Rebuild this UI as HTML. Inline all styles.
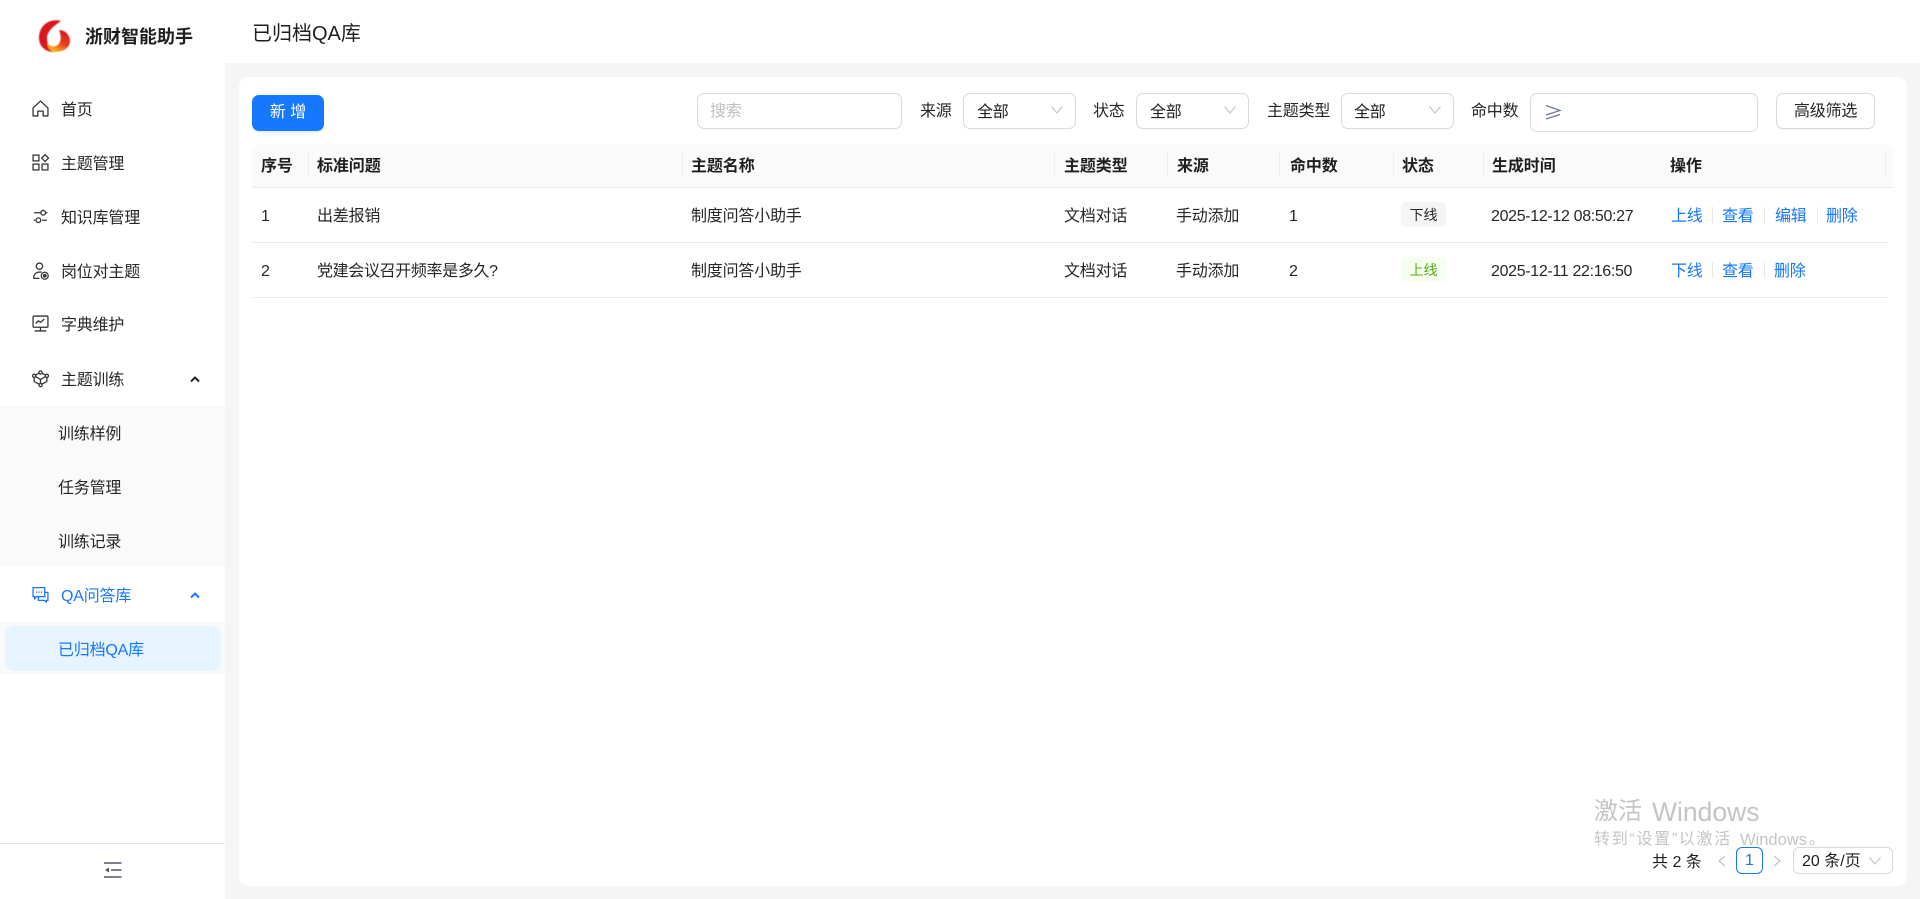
<!DOCTYPE html>
<html lang="zh-CN"><head><meta charset="utf-8"><title>已归档QA库</title>
<style>
*{box-sizing:border-box;margin:0;padding:0}
html,body{width:1920px;height:899px;overflow:hidden;background:#f5f5f5}
body{position:relative;font-family:"Liberation Sans","Noto Sans CJK SC",sans-serif;font-size:16px;color:#262626}
.a{position:absolute}
.t{position:absolute;white-space:nowrap;height:24px;line-height:24px;letter-spacing:-.2px}
.tm{letter-spacing:-.33px}
.b{font-weight:700;color:#1f1f1f;letter-spacing:-.1px}
.box{position:absolute;background:#fff;border:1.5px solid #d9d9d9;border-radius:7px}
.dv{position:absolute;width:1px;height:26px;top:152px;background:#efefef}
.ln{position:absolute;left:252px;width:1637px;height:1px;background:#ececec}
.ad{position:absolute;width:1px;height:16px;background:#e8e8e8}
.l{color:#1677ff}
svg{position:absolute;overflow:visible}
.ic{fill:none;stroke:#333;stroke-width:1.2}
.wm{position:absolute;white-space:nowrap;color:#c4c4c4;z-index:5}
</style></head><body>

<!-- sidebar -->
<div class="a" style="left:0;top:0;width:225px;height:899px;background:#fff"></div>
<div class="a" style="left:0;top:0;width:1920px;height:63px;background:#fff"></div>
<div class="a" style="left:0;top:405px;width:225px;height:162px;background:#fafafa"></div>
<div class="a" style="left:0;top:621px;width:225px;height:54px;background:#fafafa"></div>
<div class="a" style="left:5px;top:626px;width:216px;height:45px;background:#e6f4ff;border-radius:9px"></div>
<div class="a" style="left:0;top:843px;width:225px;height:1px;background:#e5e5e5"></div>

<!-- logo -->
<svg style="left:36px;top:18px" width="36" height="36" viewBox="0 0 36 36">
<defs><linearGradient id="g" x1="0.8" y1="0" x2="0.3" y2="1"><stop offset="0" stop-color="#d9121f"/><stop offset=".55" stop-color="#e8401a"/><stop offset="1" stop-color="#f9c21c"/></linearGradient><filter id="f"><feGaussianBlur stdDeviation=".45"/></filter></defs>
<g filter="url(#f)">
<path d="M25 3C14 0 3 7 3 20C3 28 9 34 18 34C14 31 11 26 11 20C11 14 16 9 25 3Z" fill="#d9121f"/>
<path d="M23 12C30 12 34 18 34 23C34 30 27 34 18 34C14 33 11 29 11 25C13 28 17 29 20 28C25 26 26 19 23 12Z" fill="url(#g)"/>
</g></svg>
<div class="t" style="left:85px;top:25px;font-size:18px;font-weight:700;color:#1f1f1f;letter-spacing:0">浙财智能助手</div>
<div class="t" style="left:252px;top:21px;font-size:20px;height:26px;line-height:26px;color:#1f1f1f;letter-spacing:0">已归档QA库</div>

<!-- icons -->
<svg class="ic" style="left:32px;top:100px" width="17" height="17" viewBox="0 0 16 16"><path d="M1 7.500L8 1L15 7.500V15H10.500V10.500H5.500V15H1Z" stroke-linejoin="round"/></svg>
<svg class="ic" style="left:32px;top:154px" width="17" height="17" viewBox="0 0 16 16"><rect x="1" y="1" width="5.500" height="5.500"/><rect x="1" y="9.500" width="5.500" height="5.500"/><rect x="9.500" y="9.500" width="5.500" height="5.500"/><path d="M12.300 .6L15.500 3.800L12.300 7L9.100 3.800Z"/></svg>
<svg class="ic" style="left:32px;top:208px" width="17" height="17" viewBox="0 0 16 16" stroke-width="1.5"><path d="M2 4.500H8M14 11.500H9.500M14.500 4.500H13M1.500 11.500H3"/><circle cx="10.500" cy="4.500" r="2.200"/><circle cx="6" cy="11.500" r="2.200"/></svg>
<svg class="ic" style="left:32px;top:262px" width="17" height="18" viewBox="0 0 16 17"><circle cx="7" cy="4" r="3"/><path d="M1.500 15.500C1.500 11.500 4 9.500 7.500 9.500H9M1.500 15.500H7"/><circle cx="12" cy="13" r="3.300"/><circle cx="12" cy="13" r="1.200" fill="#333"/></svg>
<svg class="ic" style="left:32px;top:315px" width="17" height="17" viewBox="0 0 16 16"><rect x="1" y="1" width="14" height="10.500" rx=".8"/><path d="M3.500 8L6 5.500L8 7L11.500 3.800M8 11.500V15M2.500 15H13.500"/></svg>
<svg class="ic" style="left:32px;top:370px" width="17" height="17" viewBox="0 0 16 16"><circle cx="8" cy="2.300" r="1.500"/><circle cx="2" cy="5.500" r="1.500"/><circle cx="14" cy="5.500" r="1.500"/><circle cx="8" cy="14.200" r="1.500"/><path d="M6.700 3L3.300 4.800M9.300 3L12.700 4.800M2 7V10.800L6.800 13.400M14 7V10.800L9.200 13.400M3.300 6.200L8 9L12.700 6.200M8 9V12.700"/></svg>
<svg style="left:189px;top:375px" width="12" height="8" viewBox="0 0 12 8"><path d="M2 6.500L6 2.500L10 6.500" fill="none" stroke="#222" stroke-width="2"/></svg>
<svg class="ic" style="left:32px;top:586px;stroke:#1677ff" width="17" height="17" viewBox="0 0 16 16"><path d="M1 1.500H12V10H4.500L2.500 12V10H1Z"/><path d="M12 6H15V13.500H13.500V15L11.500 13.500H6V10"/><path d="M4 5.800H5M6.200 5.800H7.200M8.400 5.800H9.400" stroke-width="1.400"/></svg>
<svg style="left:189px;top:591px" width="12" height="8" viewBox="0 0 12 8"><path d="M2 6.500L6 2.500L10 6.500" fill="none" stroke="#1677ff" stroke-width="2"/></svg>
<svg style="left:104px;top:861px" width="18" height="18" viewBox="0 0 18 18"><path d="M0 2H17.500M0 16H17.500M7 9H17.500" stroke="#4e5666" stroke-width="1.500" fill="none"/><path d="M1 9L5 6.500V11.500Z" fill="#4e5666"/></svg>

<!-- menu text -->
<div class="t" style="left:61px;top:99px">首页</div>
<div class="t" style="left:61px;top:153px">主题管理</div>
<div class="t" style="left:61px;top:207px">知识库管理</div>
<div class="t" style="left:61px;top:261px">岗位对主题</div>
<div class="t" style="left:61px;top:314px">字典维护</div>
<div class="t" style="left:61px;top:369px">主题训练</div>
<div class="t" style="left:58px;top:423px">训练样例</div>
<div class="t" style="left:58px;top:477px">任务管理</div>
<div class="t" style="left:58px;top:531px">训练记录</div>
<div class="t l" style="left:61px;top:585px">QA问答库</div>
<div class="t l" style="left:58px;top:639px">已归档QA库</div>

<!-- card -->
<div class="a" style="left:239px;top:77px;width:1668px;height:809px;background:#fff;border-radius:10px"></div>

<!-- toolbar -->
<div class="a" style="left:252px;top:95px;width:72px;height:36px;background:#1677ff;border-radius:7px;color:#fff;text-align:center;line-height:36px;box-shadow:0 2px 0 rgba(5,145,255,.1)">新 增</div>
<div class="box" style="left:697px;top:93px;width:205px;height:36px"></div>
<div class="t" style="left:710px;top:100px;color:#bfbfbf">搜索</div>
<div class="t" style="left:920px;top:100px">来源</div>
<div class="box" style="left:963px;top:93px;width:113px;height:36px"></div>
<div class="t" style="left:977px;top:101px;color:#1f1f1f">全部</div>
<div class="t" style="left:1093px;top:100px">状态</div>
<div class="box" style="left:1136px;top:93px;width:113px;height:36px"></div>
<div class="t" style="left:1150px;top:101px;color:#1f1f1f">全部</div>
<div class="t" style="left:1267px;top:100px">主题类型</div>
<div class="box" style="left:1341px;top:93px;width:113px;height:36px"></div>
<div class="t" style="left:1354px;top:101px;color:#1f1f1f">全部</div>
<svg style="left:1051px;top:106px" width="12" height="8" viewBox="0 0 12 8"><path d="M.5 .5L6 7L11.500 .5" fill="none" stroke="#c4c4c4" stroke-width="1.100"/></svg>
<svg style="left:1224px;top:106px" width="12" height="8" viewBox="0 0 12 8"><path d="M.5 .5L6 7L11.500 .5" fill="none" stroke="#c4c4c4" stroke-width="1.100"/></svg>
<svg style="left:1429px;top:106px" width="12" height="8" viewBox="0 0 12 8"><path d="M.5 .5L6 7L11.500 .5" fill="none" stroke="#c4c4c4" stroke-width="1.100"/></svg>
<div class="t" style="left:1471px;top:100px">命中数</div>
<div class="box" style="left:1530px;top:93px;width:228px;height:39px"></div>
<svg style="left:1545px;top:104px" width="16" height="16" viewBox="0 0 16 16"><path d="M1 1.500L15 6.500L1 11M1 15L15 10.500" fill="none" stroke="#6f7a8a" stroke-width="1.300"/></svg>
<div class="box" style="left:1776px;top:93px;width:99px;height:36px;box-shadow:0 1px 0 rgba(0,0,0,.03)"></div>
<div class="t" style="left:1794px;top:100px">高级筛选</div>

<!-- table -->
<div class="a" style="left:252px;top:144px;width:1641px;height:43px;background:#fafafa;border-radius:8px 8px 0 0"></div>
<div class="ln" style="top:187px;width:1641px"></div>
<div class="ln" style="top:242px"></div>
<div class="ln" style="top:297px"></div>
<div class="dv" style="left:308px"></div><div class="dv" style="left:682px"></div><div class="dv" style="left:1054px"></div><div class="dv" style="left:1167px"></div><div class="dv" style="left:1279px"></div><div class="dv" style="left:1393px"></div><div class="dv" style="left:1483px"></div><div class="dv" style="left:1885px"></div>

<div class="t b" style="left:261px;top:155px">序号</div>
<div class="t b" style="left:317px;top:155px">标准问题</div>
<div class="t b" style="left:691px;top:155px">主题名称</div>
<div class="t b" style="left:1064px;top:155px">主题类型</div>
<div class="t b" style="left:1177px;top:155px">来源</div>
<div class="t b" style="left:1290px;top:155px">命中数</div>
<div class="t b" style="left:1402px;top:155px">状态</div>
<div class="t b" style="left:1492px;top:155px">生成时间</div>
<div class="t b" style="left:1670px;top:155px">操作</div>

<div class="t" style="left:261px;top:205px">1</div>
<div class="t" style="left:317px;top:205px">出差报销</div>
<div class="t" style="left:691px;top:205px">制度问答小助手</div>
<div class="t" style="left:1064px;top:205px">文档对话</div>
<div class="t" style="left:1176px;top:205px">手动添加</div>
<div class="t" style="left:1289px;top:205px">1</div>
<div class="a" style="left:1401px;top:202px;width:45px;height:25px;background:#f5f5f5;border-radius:5px;font-size:14px;line-height:27px;text-align:center">下线</div>
<div class="t tm" style="left:1491px;top:205px">2025-12-12 08:50:27</div>
<div class="t l" style="left:1671px;top:205px">上线</div><div class="ad" style="left:1712px;top:207px"></div>
<div class="t l" style="left:1722px;top:205px">查看</div><div class="ad" style="left:1764px;top:207px"></div>
<div class="t l" style="left:1775px;top:205px">编辑</div><div class="ad" style="left:1817px;top:207px"></div>
<div class="t l" style="left:1826px;top:205px">删除</div>

<div class="t" style="left:261px;top:260px">2</div>
<div class="t" style="left:317px;top:260px;letter-spacing:-.35px">党建会议召开频率是多久?</div>
<div class="t" style="left:691px;top:260px">制度问答小助手</div>
<div class="t" style="left:1064px;top:260px">文档对话</div>
<div class="t" style="left:1176px;top:260px">手动添加</div>
<div class="t" style="left:1289px;top:260px">2</div>
<div class="a" style="left:1401px;top:257px;width:45px;height:25px;background:#f6ffed;border-radius:5px;font-size:14px;line-height:27px;text-align:center;color:#52a81a">上线</div>
<div class="t tm" style="left:1491px;top:260px">2025-12-11 22:16:50</div>
<div class="t l" style="left:1671px;top:260px">下线</div><div class="ad" style="left:1712px;top:262px"></div>
<div class="t l" style="left:1722px;top:260px">查看</div><div class="ad" style="left:1764px;top:262px"></div>
<div class="t l" style="left:1774px;top:260px">删除</div>

<!-- pagination -->
<div class="t" style="left:1652px;top:851px;color:#1f1f1f;letter-spacing:0">共 2 条</div>
<svg style="left:1717px;top:855px" width="10" height="12" viewBox="0 0 10 12"><path d="M8 1L2 6L8 11" fill="none" stroke="#c4c4c4" stroke-width="1.200"/></svg>
<div class="a l" style="left:1736px;top:847px;width:27px;height:27px;border:1.5px solid #1677ff;border-radius:6px;background:#fff;text-align:center;line-height:26px">1</div>
<svg style="left:1772px;top:855px" width="10" height="12" viewBox="0 0 10 12"><path d="M2 1L8 6L2 11" fill="none" stroke="#c4c4c4" stroke-width="1.200"/></svg>
<div class="box" style="left:1793px;top:847px;width:100px;height:27px;border-width:1px;border-radius:6px"></div>
<div class="t" style="left:1802px;top:850px;color:#1f1f1f;letter-spacing:0">20 条/页</div>
<svg style="left:1869px;top:857px" width="12" height="8" viewBox="0 0 12 8"><path d="M.5 .5L6 7L11.500 .5" fill="none" stroke="#c4c4c4" stroke-width="1.100"/></svg>

<!-- watermark -->
<div class="wm" style="left:1594px;top:795px;font-size:24px;line-height:34px">激活</div>
<div class="wm" style="left:1652px;top:795px;font-size:26.500px;line-height:34px">Windows</div>
<div class="wm" style="left:1594px;top:828px;font-size:16px;line-height:24px;letter-spacing:1.700px">转到“设置”以激活</div>
<div class="wm" style="left:1740px;top:828px;font-size:16.500px;line-height:24px">Windows</div>
<div class="wm" style="left:1809px;top:828px;font-size:16px;line-height:24px">。</div>
</body></html>
